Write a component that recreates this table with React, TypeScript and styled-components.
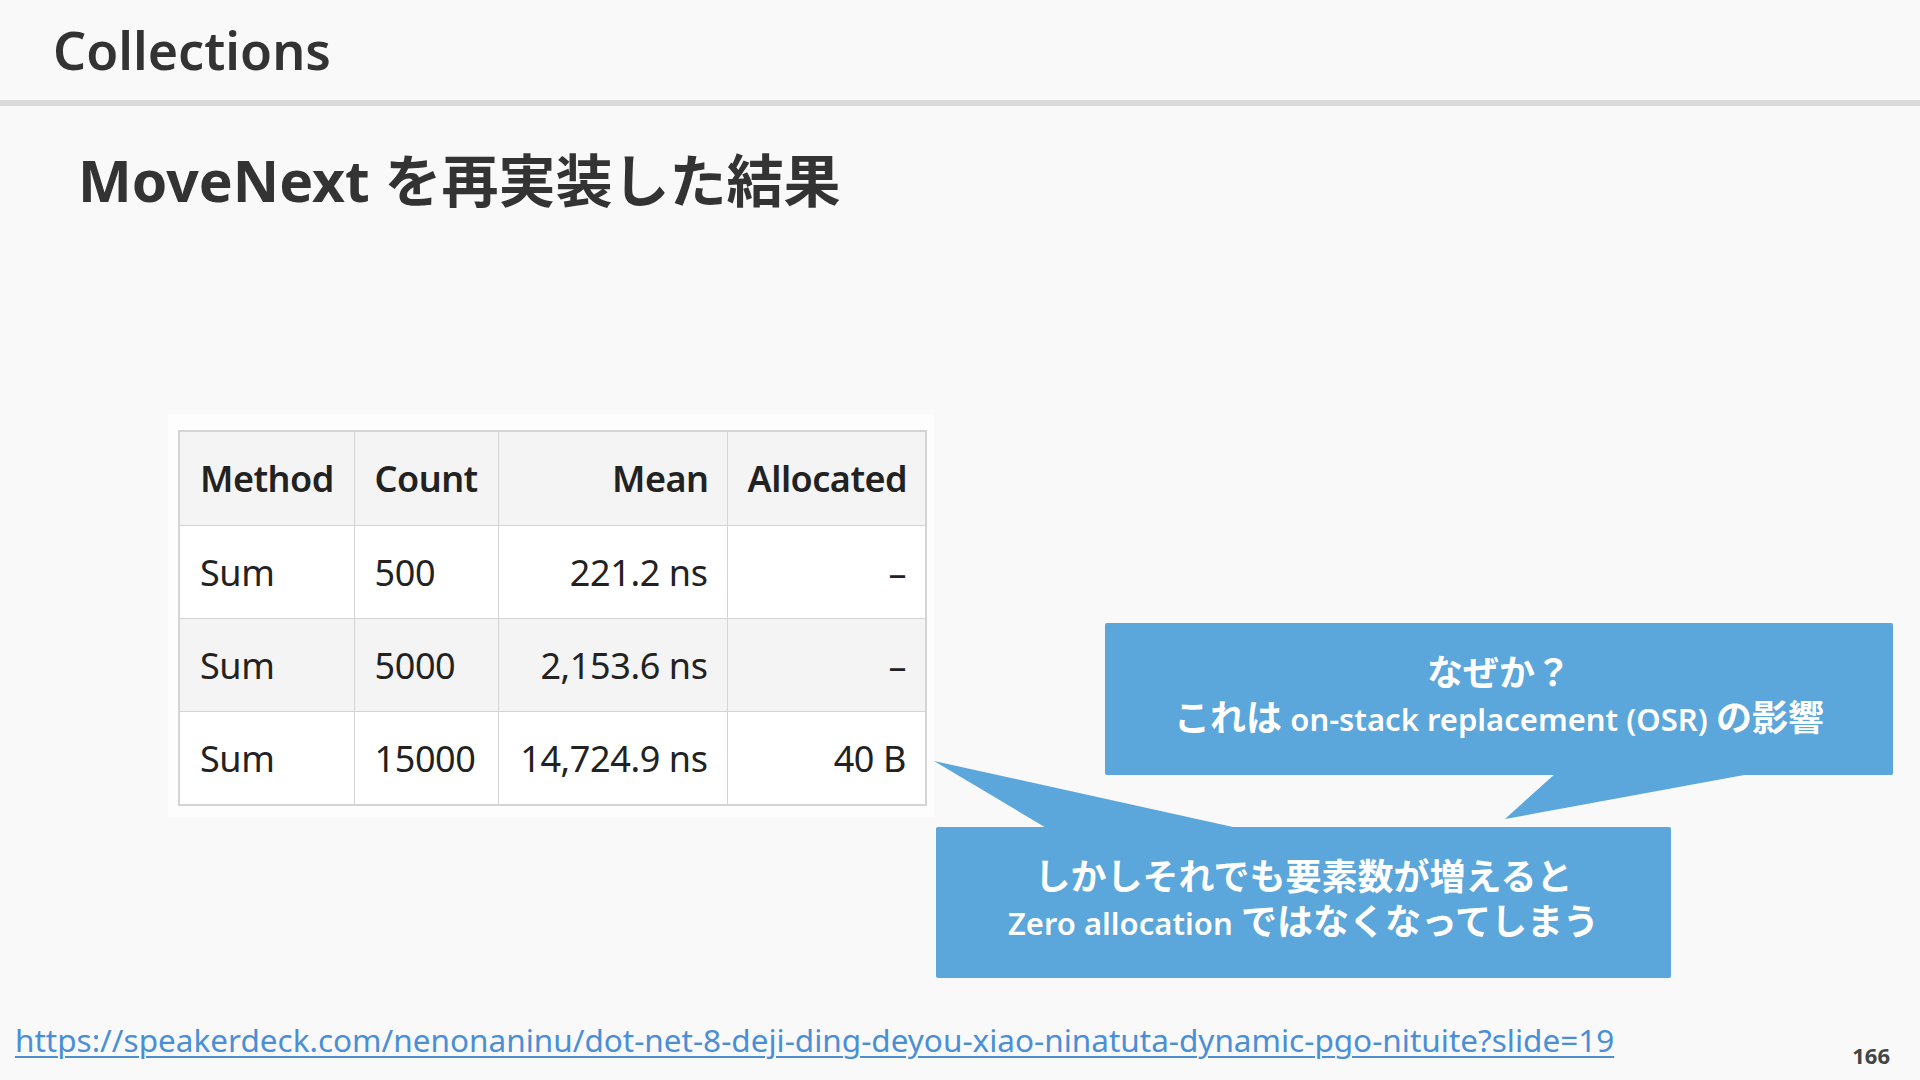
import React from 'react';
import styled, { createGlobalStyle } from 'styled-components';

const GlobalStyle = createGlobalStyle`
  html, body { margin: 0; padding: 0; background: #f9f9f9; }
  body { font-family: "Noto Sans", "Noto Sans CJK JP", sans-serif; }
`;

const Slide = styled.div`
  position: relative;
  width: 1920px;
  height: 1080px;
  overflow: hidden;
  background: #f9f9f9;
  display: flex;
  flex-direction: column;
`;

const Header = styled.header`
  height: 100px;
  border-bottom: 6px solid #dadada;
  display: flex;
  align-items: center;
  padding-left: 53px;
  flex: none;
`;

const HeaderTitle = styled.h1`
  margin: 0;
  font-size: 52px;
  font-weight: 600;
  color: #333;
  line-height: 1;
`;

const Title = styled.h2`
  margin: 39px 0 0 78px;
  font-size: 57px;
  font-weight: 700;
  color: #333;
  line-height: 70px;
  font-family: "Noto Sans", "Noto Sans CJK JP", sans-serif;
`;

const Content = styled.main`
  flex: 1;
  display: flex;
  align-items: flex-start;
  padding: 199px 0 0 168px;
`;

const TableWrap = styled.div`
  background: #fdfdfd;
  padding: 16px 7px 11px 10px;
`;

const Table = styled.table`
  width: 747px;
  border-collapse: collapse;
  table-layout: fixed;
  border: 2px solid #d4d4d4;
  font-family: "Noto Sans", sans-serif;
  color: #222;
`;

const Row = styled.tr<{ $shade?: boolean }>`
  background: ${(p) => (p.$shade ? '#f4f4f4' : '#ffffff')};
`;

const HeadCell = styled.th<{ $right?: boolean }>`
  height: 93px;
  padding: 0 18px 0 20px;
  font-size: 36px;
  font-weight: 600;
  text-align: ${(p) => (p.$right ? 'right' : 'left')};
  border: 1.5px solid #d4d4d4;
  letter-spacing: -0.5px;
  white-space: nowrap;
`;

const Cell = styled.td<{ $right?: boolean }>`
  height: 92px;
  padding: 0 19px 0 20px;
  font-size: 36px;
  font-weight: 400;
  text-align: ${(p) => (p.$right ? 'right' : 'left')};
  border: 1.5px solid #d4d4d4;
  letter-spacing: -0.4px;
  white-space: nowrap;
`;

const Callout = styled.div<{ $x: number; $y: number; $w: number; $h: number }>`
  position: absolute;
  left: ${(p) => p.$x}px;
  top: ${(p) => p.$y}px;
  width: ${(p) => p.$w}px;
  height: ${(p) => p.$h}px;
  box-sizing: border-box;
  padding-bottom: 8px;
  background: #5ba6da;
  border-radius: 2px;
  color: #fff;
  display: flex;
  flex-direction: column;
  align-items: center;
  justify-content: center;
  font-family: "Noto Sans CJK JP", sans-serif;
  font-weight: 700;
  font-size: 36px;
  line-height: 45px;
  text-align: center;
`;

const Tail = styled.svg`
  position: absolute;
  overflow: visible;
  left: 0;
  top: 0;
  pointer-events: none;
`;

const Latin = styled.span`
  font-family: "Noto Sans", sans-serif;
  font-weight: 600;
  font-size: 31px;
`;

const Line = styled.div`
  white-space: nowrap;
`;

const Footer = styled.footer`
  height: 60px;
  display: flex;
  align-items: flex-start;
  justify-content: space-between;
  padding: 0 30px 0 15px;
  flex: none;
`;

const Link = styled.a`
  font-family: "Noto Sans", sans-serif;
  font-size: 31.5px;
  color: #4a8fd6;
  text-decoration: underline;
  text-decoration-thickness: 2px;
  text-underline-offset: 4px;
  line-height: 40px;
  letter-spacing: 0;
`;

const PageNo = styled.span`
  font-family: "Noto Sans", sans-serif;
  font-size: 22px;
  font-weight: 700;
  color: #444;
  margin-top: 20px;
`;

const rows = [
  { m: 'Sum', c: '500', mean: '221.2 ns', a: '–' },
  { m: 'Sum', c: '5000', mean: '2,153.6 ns', a: '–' },
  { m: 'Sum', c: '15000', mean: '14,724.9 ns', a: '40 B' },
];

export default function App() {
  return (
    <>
      <GlobalStyle />
      <Slide>
        <Header>
          <HeaderTitle>Collections</HeaderTitle>
        </Header>
        <Title>MoveNext を再実装した結果</Title>
        <Content>
          <TableWrap>
            <Table>
              <colgroup>
                <col style={{ width: 175 }} />
                <col style={{ width: 144 }} />
                <col style={{ width: 229 }} />
                <col style={{ width: 199 }} />
              </colgroup>
              <thead>
                <Row $shade>
                  <HeadCell>Method</HeadCell>
                  <HeadCell>Count</HeadCell>
                  <HeadCell $right>Mean</HeadCell>
                  <HeadCell $right>Allocated</HeadCell>
                </Row>
              </thead>
              <tbody>
                {rows.map((r, i) => (
                  <Row key={i} $shade={i % 2 === 1}>
                    <Cell>{r.m}</Cell>
                    <Cell>{r.c}</Cell>
                    <Cell $right>{r.mean}</Cell>
                    <Cell $right>{r.a}</Cell>
                  </Row>
                ))}
              </tbody>
            </Table>
          </TableWrap>
        </Content>
        <Footer>
          <Link href="#">https://speakerdeck.com/nenonaninu/dot-net-8-deji-ding-deyou-xiao-ninatuta-dynamic-pgo-nituite?slide=19</Link>
          <PageNo>166</PageNo>
        </Footer>

        <Callout $x={1105} $y={623} $w={788} $h={152}>
          <Tail width="1" height="1">
            <polygon points="451,150 400,196 650,150" fill="#5ba6da" />
          </Tail>
          <Line>なぜか？</Line>
          <Line>
            これは <Latin>on-stack replacement (OSR)</Latin> の影響
          </Line>
        </Callout>

        <Callout $x={936} $y={827} $w={735} $h={151}>
          <Tail width="1" height="1">
            <polygon points="-2,-66 112,2 306,2" fill="#5ba6da" />
          </Tail>
          <Line>しかしそれでも要素数が増えると</Line>
          <Line>
            <Latin>Zero allocation</Latin> ではなくなってしまう
          </Line>
        </Callout>
      </Slide>
    </>
  );
}
